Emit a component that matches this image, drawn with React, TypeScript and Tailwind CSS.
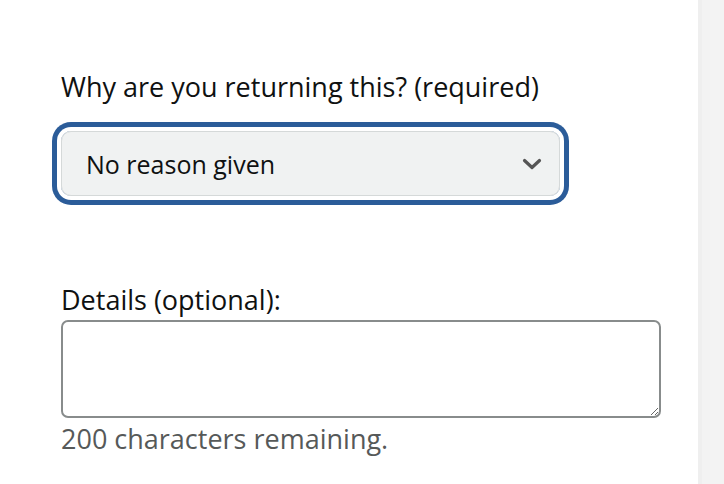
export default function App() {
  return (
    <div className="flex h-[484px] w-[724px] overflow-hidden bg-white font-['Open_Sans',sans-serif] text-[#0f1111]">
      <main className="w-[698px] shrink-0 pl-[61px] pt-[71px]">
        <label className="block text-[27px] leading-[32px]">
          Why are you returning this? (required)
        </label>

        <div className="mt-[28px] w-[499px] rounded-[10px] shadow-[0_0_0_4px_#ffffff,0_0_0_9px_#2b5c99]">
          <div className="flex h-[65px] items-center justify-between rounded-[10px] border border-[#d5d9d9] bg-[#f0f2f2] pl-[24px] pr-[17px]">
            <span className="text-[25px] leading-[32px]">No reason given</span>
            <svg width="20" height="12" viewBox="0 0 20 12" fill="none" aria-hidden="true">
              <path d="M2.5 2.5 L10 9.5 L17.5 2.5" stroke="#555" strokeWidth="3.2" strokeLinecap="round" strokeLinejoin="round" />
            </svg>
          </div>
        </div>

        <label className="mt-[88px] block text-[27px] leading-[32px]">Details (optional):</label>
        <textarea className="mt-[4px] block h-[98px] w-[600px] rounded-[7px] border-2 border-[#888c8c] bg-white outline-none" />
        <p className="mt-[5px] text-[27px] leading-[32px] text-[#565959]">200 characters remaining.</p>
      </main>
      <aside className="flex-1 border-l-[4px] border-[#efefef] bg-[#f3f3f3]" />
    </div>
  );
}
